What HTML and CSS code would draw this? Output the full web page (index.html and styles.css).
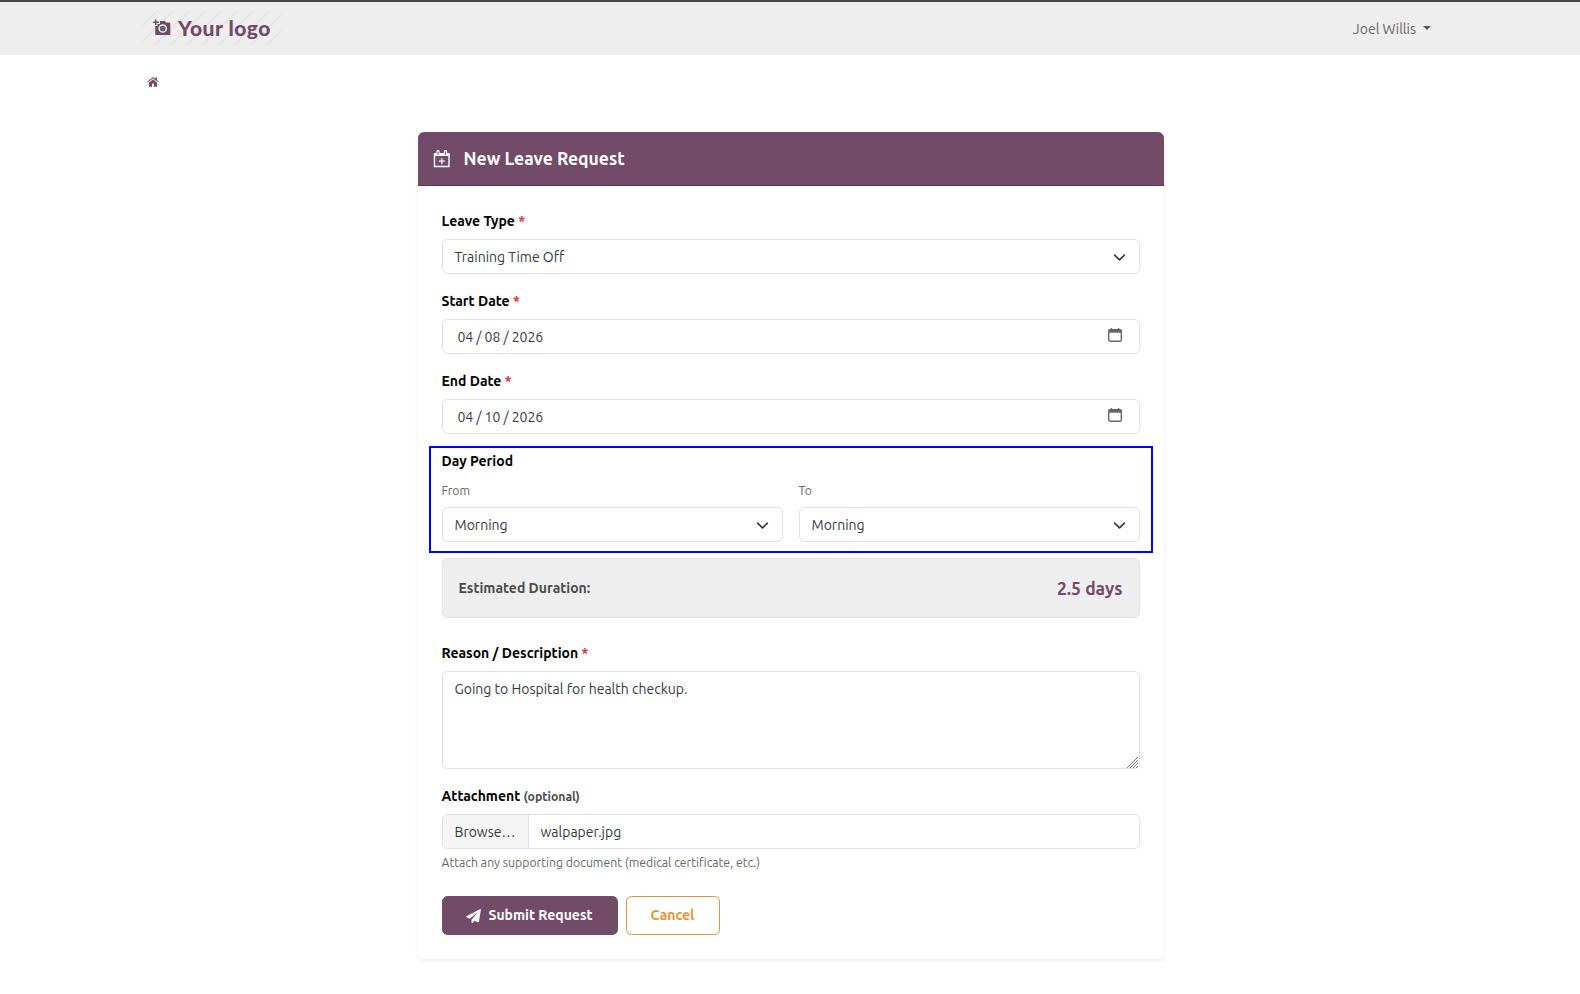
FILE: index.html
```html
<!DOCTYPE html>
<html lang="en">
<head>
    <meta charset="UTF-8">
    <meta name="viewport" content="width=device-width, initial-scale=1.0">
    <title>New Leave Request</title>
    <link rel="stylesheet" href="styles.css">
</head>
<body>

    <!-- Top navigation -->
    <header class="navbar">
        <a href="#" class="logo">
            <svg class="logo-hatch" width="138" height="37" viewBox="0 0 138 37">
                <path d="M-6 21 15 0M-6 37 31 0M10 37 47 0M26 37 63 0M42 37 79 0M58 37 95 0M74 37 111 0M90 37 127 0M106 37 143 0M122 37 143 16" stroke="#e7e7e7" stroke-width="2.500" fill="none"/>
            </svg>
            <svg class="logo-icon" width="18" height="17" viewBox="0 0 18 17">
                <path fill="#714b67" fill-rule="evenodd" d="M2 .5h1.500v2H6V4H3.500v2H2V4H0V2.500h2zM7 2h5l1 1.500h3.500q.8 0 .8.800v10.900q0 .8-.8.800H3q-.8 0-.8-.8V7H4.500V5H7z"/>
                <circle cx="9.700" cy="9.500" r="3.600" fill="#714b67" stroke="#eee" stroke-width="1.500"/>
                <circle cx="9.700" cy="9.500" r="2.400" fill="#666"/>
            </svg>
            <span class="logo-text">Your logo</span>
        </a>
        <a href="#" class="user-menu"><span class="user-name">Joel Willis</span><span class="caret"></span></a>
    </header>

    <!-- Breadcrumb -->
    <nav class="breadcrumb">
        <a href="#" aria-label="Home">
            <svg width="12" height="10" viewBox="0 0 13 11" fill="#714b67">
                <path d="M6.500 2.500 11 6.200V10q0 .6-.6.6H7.600V7.500H5.400v3.100H2.600Q2 10.600 2 10V6.200z"/>
                <path d="M6.500 0 9 2V.5h1.900v3.100L13 5.300l-.7.800-5.800-4.700L.7 6.100 0 5.300z"/>
            </svg>
        </a>
    </nav>

    <form class="card">
        <div class="card-header">
            <svg width="18" height="18" viewBox="0 0 18 18" fill="none" stroke="#fff">
                <path d="M1.500 4v12.500h14.500V4" stroke-width="1.400"/>
                <path d="M1 4.500h15.500" stroke-width="3"/>
                <path d="M5 1.500v3M12.500 1.500v3" stroke-width="3.200" stroke-linecap="round"/>
                <path d="M5 2v2.600M12.500 2v2.600" stroke="#714b67" stroke-width="1" stroke-linecap="round"/>
                <path d="M8.800 8.200v6M5.800 11.200h6" stroke-width="1.200"/>
            </svg>
            <h1>New Leave Request</h1>
        </div>

        <div class="card-body">
            <div class="field">
                <label class="label">Leave Type <span class="required">*</span></label>
                <div class="control">
                    <span class="value">Training Time Off</span>
                    <svg class="chevron" width="13" height="13" viewBox="0 0 16 16"><path d="m2 5 6 6 6-6" fill="none" stroke="#343a40" stroke-width="2" stroke-linecap="round" stroke-linejoin="round"/></svg>
                </div>
            </div>

            <div class="field">
                <label class="label">Start Date <span class="required">*</span></label>
                <div class="control date">
                    <span class="value">04 / 08 / 2026</span>
                    <svg class="calendar" width="14" height="14" viewBox="0 0 14 14"><path d="M3.500 0v2M10.500 0v2" stroke="#666" stroke-width="1.300"/><rect x=".7" y="1.700" width="12.600" height="11.600" rx="1.500" fill="none" stroke="#666" stroke-width="1.400"/><path d="M.7 3.200h12.600" stroke="#666" stroke-width="3"/></svg>
                </div>
            </div>

            <div class="field">
                <label class="label">End Date <span class="required">*</span></label>
                <div class="control date">
                    <span class="value">04 / 10 / 2026</span>
                    <svg class="calendar" width="14" height="14" viewBox="0 0 14 14"><path d="M3.500 0v2M10.500 0v2" stroke="#666" stroke-width="1.300"/><rect x=".7" y="1.700" width="12.600" height="11.600" rx="1.500" fill="none" stroke="#666" stroke-width="1.400"/><path d="M.7 3.200h12.600" stroke="#666" stroke-width="3"/></svg>
                </div>
            </div>

            <!-- Half day selection -->
            <div class="day-period">
                <label class="label">Day Period</label>
                <div class="period-row">
                    <div class="period">
                        <label class="sub-label">From</label>
                        <div class="control">
                            <span class="value">Morning</span>
                            <svg class="chevron" width="13" height="13" viewBox="0 0 16 16"><path d="m2 5 6 6 6-6" fill="none" stroke="#343a40" stroke-width="2" stroke-linecap="round" stroke-linejoin="round"/></svg>
                        </div>
                    </div>
                    <div class="period">
                        <label class="sub-label">To</label>
                        <div class="control">
                            <span class="value">Morning</span>
                            <svg class="chevron" width="13" height="13" viewBox="0 0 16 16"><path d="m2 5 6 6 6-6" fill="none" stroke="#343a40" stroke-width="2" stroke-linecap="round" stroke-linejoin="round"/></svg>
                        </div>
                    </div>
                </div>
            </div>

            <div class="duration">
                <span class="duration-label">Estimated Duration:</span>
                <span class="duration-value">2.5 days</span>
            </div>

            <div class="field">
                <label class="label">Reason / Description <span class="required">*</span></label>
                <div class="control textarea">
                    <span class="value">Going to Hospital for health checkup.</span>
                    <svg class="grip" width="11" height="11" viewBox="0 0 11 11"><path d="M0 11 11 0M3 11l8-8M6 11l5-5M9 11l2-2" stroke="#777" stroke-width="1" fill="none"/></svg>
                </div>
            </div>

            <div class="attachment">
                <label class="label">Attachment <span class="optional">(optional)</span></label>
                <div class="control file">
                    <span class="browse">Browse…</span>
                    <span class="value file-name">walpaper.jpg</span>
                </div>
                <div class="help">Attach any supporting document (medical certificate, etc.)</div>
            </div>

            <div class="buttons">
                <button type="button" class="button submit">
                    <svg width="15" height="14" viewBox="0 0 15 14"><path fill="#fff" d="M14.300 0q.7.100.6.800l-2 12q-.2.700-.9.500L8.400 11.800 6.500 14q-.8.500-1-.4v-2.900L12.300 2.400 3.900 9.700.500 8.300q-.8-.5 0-1z"/></svg>
                    <span>Submit Request</span>
                </button>
                <button type="button" class="button cancel">Cancel</button>
            </div>
        </div>
    </form>

</body>
</html>
```

FILE: styles.css
```css
* {
    box-sizing: border-box;
}
body {
    margin: 0;
    min-height: 994px;
    background: #fff;
    color: #343a40;
    font-family: Ubuntu, "Noto Sans", sans-serif;
    font-size: 14px;
    line-height: 21px;
}
a {
    text-decoration: none;
}
svg {
    display: block;
    flex: none;
}
.navbar {
    height: 55px;
    padding: 0 149px 0 143px;
    border-top: 2px solid #474747;
    background: #eee;
    display: flex;
    justify-content: space-between;
    align-items: center;
}
.logo {
    position: relative;
    width: 138px;
    height: 37px;
    padding-left: 10px;
    display: flex;
    align-items: center;
    gap: 7px;
}
.logo-hatch {
    position: absolute;
    top: 0;
    left: 0;
}
.logo-icon {
    position: relative;
    margin-top: -2px;
}
.logo-text {
    position: relative;
    margin-top: -2px;
    font-family: Lato, sans-serif;
    font-size: 21px;
    font-weight: 900;
    line-height: 24px;
    letter-spacing: 0.5px;
    color: #714b67;
    white-space: nowrap;
}
.user-menu {
    display: flex;
    align-items: center;
    gap: 7px;
    color: #666;
}
.user-name {
    padding-top: 1px;
}
.caret {
    margin-top: -1px;
    border-top: 4px solid #555;
    border-left: 4px solid transparent;
    border-right: 4px solid transparent;
}
.breadcrumb {
    height: 77px;
    padding: 22px 0 0 147px;
}
.card {
    width: 746px;
    margin: 0 auto 0 417.5px;
    border-radius: 6px;
    box-shadow: 0 2px 4px rgba(0, 0, 0, 0.075);
}
.card-header {
    height: 54px;
    padding: 0 15px;
    border-bottom: 1px solid #5a3c52;
    border-radius: 6px 6px 0 0;
    background: #714b67;
    color: #fff;
    display: flex;
    align-items: center;
    gap: 13px;
}
h1 {
    margin: 0;
    font-size: 17.5px;
    font-weight: 600;
    line-height: 21px;
}
.card-body {
    padding: 24px;
}
.field {
    margin-bottom: 16px;
}
.label {
    display: block;
    margin-bottom: 7px;
    padding-top: 1px;
    font-weight: 600;
    color: #000;
}
.required {
    color: #dc3545;
}
.control {
    position: relative;
    height: 35px;
    padding: 0 13px 0 12px;
    border: 1px solid #dee2e6;
    border-radius: 5.6px;
    background: #fff;
    display: flex;
    justify-content: space-between;
    align-items: center;
}
.value {
    padding-top: 1px;
}
.chevron {
    margin-top: 1px;
}
.date {
    padding: 0 17px 0 15px;
}
.date .value {
    letter-spacing: -0.05px;
}
.calendar {
    margin-top: -4px;
}
/* Highlighted around the period selectors */
.day-period {
    margin: -4px -13px 5px;
    padding: 2px 11px 9px;
    border: 2px solid #0000ff;
}
.period-row {
    display: grid;
    grid-template-columns: 1fr 1fr;
    gap: 16px;
}
.sub-label {
    display: block;
    margin-bottom: 6px;
    padding-top: 1px;
    font-size: 12.25px;
    color: #666;
}
.duration {
    height: 60px;
    margin-bottom: 24px;
    padding: 0 16px;
    border: 1px solid #dee2e6;
    border-radius: 5.6px;
    background: #eee;
    display: flex;
    justify-content: space-between;
    align-items: center;
}
.duration-label {
    font-weight: 600;
    color: #4b4b4b;
}
.duration-value {
    font-size: 17.5px;
    font-weight: 600;
    color: #714b67;
}
.textarea {
    height: 98px;
    padding-top: 6px;
    align-items: flex-start;
}
.grip {
    position: absolute;
    right: 1px;
    bottom: 0;
}
.optional {
    font-size: 12.25px;
    color: #4b4b4b;
}
.file {
    padding: 0;
    justify-content: flex-start;
    overflow: hidden;
}
.browse {
    width: 86px;
    height: 100%;
    padding: 7px 12px 5px;
    border-right: 1px solid #dee2e6;
    background: #f5f5f5;
}
.file-name {
    margin-left: 12px;
}
.help {
    height: 18px;
    margin-top: 5px;
    font-size: 12.25px;
    line-height: 18px;
    color: #666;
}
.buttons {
    margin-top: 24px;
    display: flex;
    gap: 8px;
}
.button {
    height: 39px;
    border: 1px solid #714b67;
    border-radius: 5.6px;
    font: inherit;
    font-weight: 600;
    cursor: pointer;
    display: flex;
    justify-content: center;
    align-items: center;
    gap: 7px;
}
.submit {
    width: 176px;
    background: #714b67;
    color: #fff;
}
.cancel {
    width: 94px;
    border-color: #e0953d;
    background: #fff;
    color: #e0953d;
}
```
